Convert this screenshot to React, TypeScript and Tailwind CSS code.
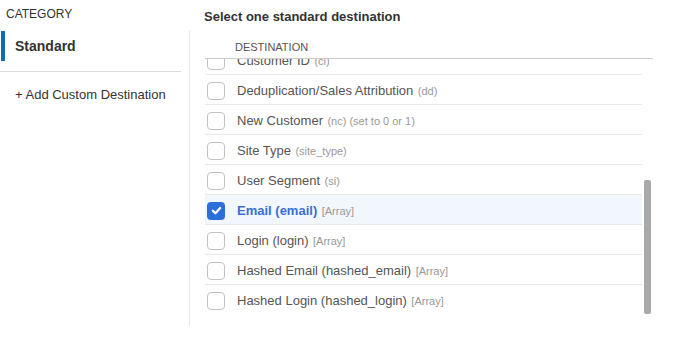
import { useLayoutEffect, useRef } from "react";

type Destination = {
  label: string;
  key: string;
  note?: string;
  array?: boolean;
};

const destinations: Destination[] = [
  { label: "Account ID", key: "ai" },
  { label: "Order ID", key: "oid" },
  { label: "Order Value", key: "ov" },
  { label: "Currency", key: "cur" },
  { label: "Product ID", key: "pid" },
  { label: "Category", key: "cat" },
  { label: "Country", key: "co" },
  { label: "Customer ID", key: "cl" },
  { label: "Deduplication/Sales Attribution", key: "dd" },
  { label: "New Customer", key: "nc", note: "(set to 0 or 1)" },
  { label: "Site Type", key: "site_type" },
  { label: "User Segment", key: "si" },
  { label: "Email", key: "email", array: true },
  { label: "Login", key: "login", array: true },
  { label: "Hashed Email", key: "hashed_email", array: true },
  { label: "Hashed Login", key: "hashed_login", array: true },
];

const selected = "email";

function Checkbox({ checked }: { checked: boolean }) {
  return checked ? (
    <span className="mt-[2px] flex h-[18px] w-[18px] shrink-0 items-center justify-center rounded-[4px] bg-[#2c6fdb]">
      <svg viewBox="0 0 12 12" className="h-[11px] w-[11px]">
        <path
          d="M2 6.3 4.8 9 10 3.3"
          fill="none"
          stroke="white"
          strokeWidth="2.4"
          strokeLinecap="round"
          strokeLinejoin="round"
        />
      </svg>
    </span>
  ) : (
    <span className="mt-[2px] h-[18px] w-[18px] shrink-0 rounded-[4px] border border-[#c2c2c2] bg-white" />
  );
}

function DestinationRow({ item }: { item: Destination }) {
  const active = item.key === selected;
  const array = item.array;
  return (
    <div
      className={`flex h-[30px] items-center gap-[12px] pl-[2px] ${
        active ? "bg-[#f2f7fe]" : ""
      }`}
    >
      <Checkbox checked={active} />
      <span className="truncate">
        {array ? (
          <span
            className={`text-[13px] ${
              active ? "font-bold text-[#3a6ed4]" : "text-[#555]"
            }`}
          >
            {item.label} ({item.key})
          </span>
        ) : (
          <span className="text-[13px] text-[#555]">{item.label}</span>
        )}{" "}
        <span className="text-[11px] text-[#999]">
          {array ? "[Array]" : `(${item.key})`}
          {item.note && ` ${item.note}`}
        </span>
      </span>
    </div>
  );
}

export default function App() {
  const listRef = useRef<HTMLDivElement>(null);

  useLayoutEffect(() => {
    if (listRef.current) listRef.current.scrollTop = listRef.current.scrollHeight;
  }, []);

  return (
    <div className="flex h-[348px] w-[678px] bg-white font-['Liberation_Sans',Arial,sans-serif] text-[#333]">
      <aside className="flex w-[190px] shrink-0 flex-col">
        <div className="h-[31px] pl-[6px] pt-[7px] text-[12px] leading-[15px]">
          CATEGORY
        </div>
        <div className="mb-[23px] flex-1 border-r border-[#e6e6e6]">
          <div className="ml-[1px] flex h-[30px] items-center border-l-4 border-[#0b6fb6] pl-[10px] text-[14px] font-bold">
            Standard
          </div>
          <div className="mt-[10px] mr-[8px] border-t border-[#dcdcdc]" />
          <div className="pl-[15px] pt-[15px] text-[13px] leading-[16px]">
            + Add Custom Destination
          </div>
        </div>
      </aside>

      <section className="flex min-w-0 flex-1 flex-col pl-[15px] pr-[25px]">
        <h2 className="-ml-px pt-[9px] text-[13px] font-bold leading-[16px]">
          Select one standard destination
        </h2>
        <div className="border-b border-[#cccccc] pb-[4px] pl-[30px] pt-[15px] text-[11px] leading-[14px] text-[#555]">
          DESTINATION
        </div>
        <div className="relative">
          <div
            ref={listRef}
            className="mr-[11px] h-[256px] divide-y divide-[#e9e9e9] overflow-hidden"
          >
            {destinations.map((item) => (
              <DestinationRow key={item.key} item={item} />
            ))}
          </div>
          <div className="absolute right-[2px] top-[121px] h-[134px] w-[7px] rounded-[2px] bg-[#a9a9a9]" />
        </div>
      </section>
    </div>
  );
}
